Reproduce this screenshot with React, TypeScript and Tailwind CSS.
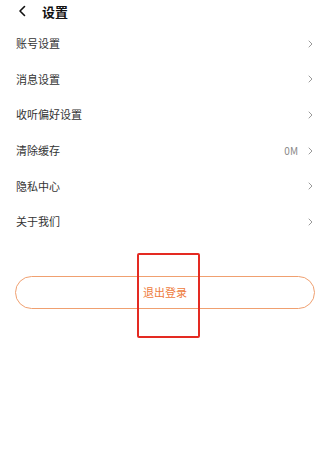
import React from 'react';

interface Item {
    label: string;
    value?: string;
}

const items: Item[] = [
    { label: '账号设置' },
    { label: '消息设置' },
    { label: '收听偏好设置' },
    { label: '清除缓存', value: '0M' },
    { label: '隐私中心' },
    { label: '关于我们' },
];

function Chevron() {
    return (
        <svg width="5" height="8" viewBox="0 0 5 8" fill="none" className="shrink-0">
            <path d="M1 1l3 3-3 3" stroke="#9a9a9a" strokeWidth="1" strokeLinecap="round" strokeLinejoin="round" />
        </svg>
    );
}

export default function App() {
    return (
        <div
            className="relative w-[320px] h-[471px] bg-white overflow-hidden"
            style={{ fontFamily: '"Noto Sans CJK SC", "Noto Sans", sans-serif' }}
        >
            {/* header */}
            <div className="h-[22px] flex items-center pl-[18px]">
                <svg width="9" height="12" viewBox="0 0 9 12" fill="none">
                    <path d="M6.5 1.5L2 6l4.5 4.5" stroke="#111" strokeWidth="1.6" strokeLinecap="round" strokeLinejoin="round" />
                </svg>
                <span className="ml-[15px] text-[13px] font-bold text-[#111] leading-none">设置</span>
            </div>

            {/* list */}
            <div className="pt-[4px]">
                {items.map((item, index) => (
                    <div key={index} className="h-[35.6px] flex items-center pl-[16px] pr-[7px]">
                        <span className="flex-1 text-[11px] text-[#333] leading-none">{item.label}</span>
                        {item.value && (
                            <span className="mr-[10px] text-[10px] text-[#888] leading-none">{item.value}</span>
                        )}
                        <Chevron />
                    </div>
                ))}
            </div>

            {/* logout */}
            <div className="mt-[36px] pl-[15px] pr-[5px]">
                <button className="w-full h-[33px] rounded-full border border-[#f0a070] text-[#ee7b3c] text-[11px] leading-none flex items-center justify-center">
                    退出登录
                </button>
            </div>

            {/* annotation box */}
            <div className="absolute left-[137px] top-[253px] w-[63px] h-[85px] border-2 border-[#e42a22] rounded-[2px]" />
        </div>
    );
}
